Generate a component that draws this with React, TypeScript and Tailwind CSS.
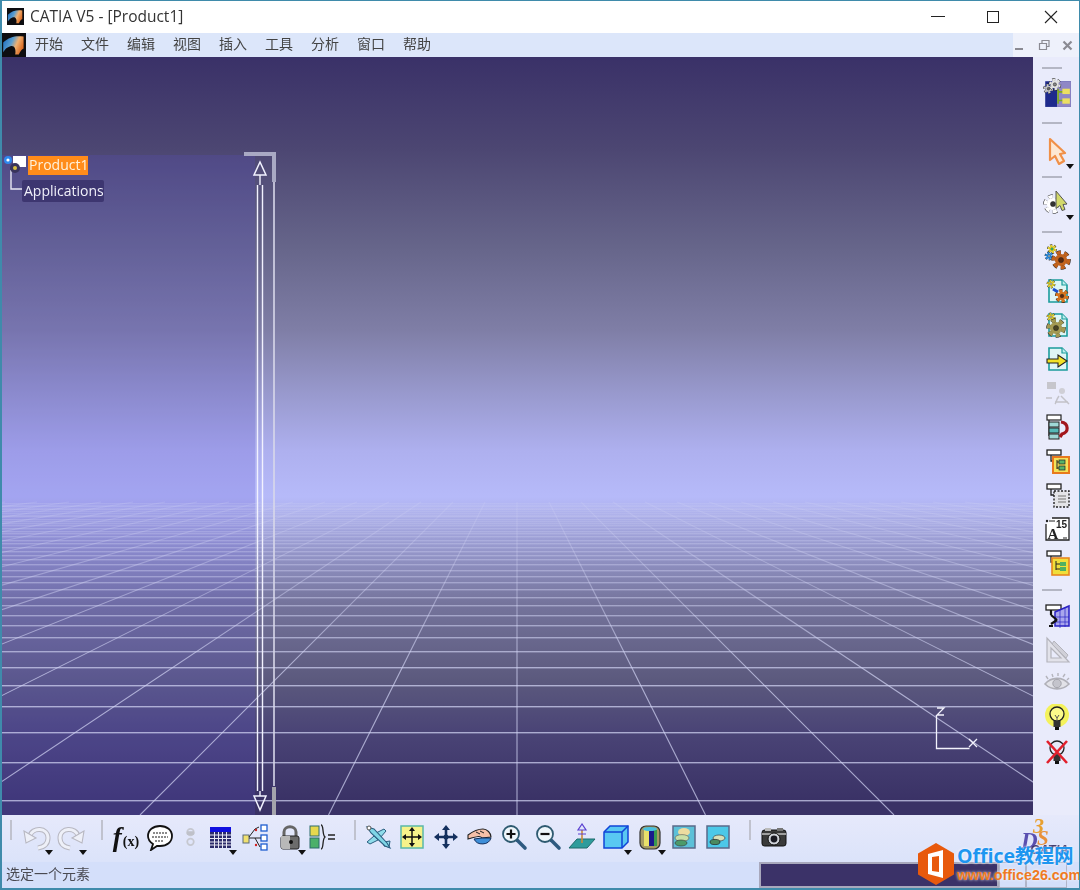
import type { ReactNode } from 'react';

const MENUS = ['开始', '文件', '编辑', '视图', '插入', '工具', '分析', '窗口', '帮助'];

// perspective of the floor grid, in viewport coordinates
const CX = 515;
const HORIZON = 381;
const FLOOR_Y = Array.from({ length: 46 }, (_, n) => HORIZON + 1 / (0.00276 + 0.000322 * n)).filter((y) => y > 445);
const FLOOR_X = Array.from({ length: 61 }, (_, i) => i - 30);

function Svg({ children, size = 28 }: { children: ReactNode; size?: number }) {
  return (
    <svg width={size} height={size} viewBox="0 0 28 28" className="block">
      {children}
    </svg>
  );
}

function Gear({ x, y, r, fill, hole = '#fff' }: { x: number; y: number; r: number; fill: string; hole?: string }) {
  const dash = `${r * 0.5} ${r * 0.4}`;
  return (
    <g>
      <circle cx={x} cy={y} r={r * 0.88} fill="none" stroke="#222" strokeWidth={r * 0.42 + 1} strokeDasharray={dash} />
      <circle cx={x} cy={y} r={r * 0.88} fill="none" stroke={fill} strokeWidth={r * 0.42} strokeDasharray={dash} />
      <circle cx={x} cy={y} r={r * 0.72} fill={fill} />
      <circle cx={x} cy={y} r={r * 0.3} fill={hole} stroke="#222" strokeWidth="0.5" />
    </g>
  );
}

function Doc({ children }: { children?: ReactNode }) {
  return (
    <g>
      <path d="M6 3h13l5 5v17H6z" fill="#dff6f6" stroke="#1b9c9c" strokeWidth="1.6" />
      <path d="M19 3v5h5" fill="#bdeeee" stroke="#1b9c9c" strokeWidth="1.2" />
      {children}
    </g>
  );
}

function Tree({ y = 3 }: { y?: number }) {
  return (
    <g>
      <rect x="4" y={y} width="14" height="5" fill="#fff" stroke="#222" strokeWidth="1.3" />
      <path d={`M8 ${y + 5}v6h5`} fill="none" stroke="#222" strokeWidth="1.3" />
    </g>
  );
}

function AppLogo({ size, id }: { size: number; id: string }) {
  return (
    <svg width={size} height={size} viewBox="0 0 20 20" className="block">
      <defs>
        <linearGradient id={id} x1="0" y1="0.2" x2="1" y2="0.6">
          <stop offset="0" stopColor="#1f6fc0" />
          <stop offset="0.4" stopColor="#5c9fd0" />
          <stop offset="0.65" stopColor="#f0b070" />
          <stop offset="1" stopColor="#d8651e" />
        </linearGradient>
      </defs>
      <rect width="20" height="20" fill="#0d0d10" />
      <path d="M1 8C6 3 12 2 18 3v10c-2 1-3 3-4 5h-3c1-5-1-8-4-7-3 1-4 2-6 5z" fill={`url(#${id})`} />
    </svg>
  );
}

const SIDE = {
  catalog: (
    <Svg size={30}>
      <rect x="3" y="3" width="24" height="24" fill="#1e2a8c" />
      <rect x="14" y="3" width="13" height="24" fill="#8f87c6" />
      <path d="M15 10v14M15 13h5M15 21h5" stroke="#7faa20" strokeWidth="1.6" fill="none" />
      <rect x="19" y="10" width="7" height="5" fill="#ecdf62" />
      <rect x="19" y="19" width="7" height="5" fill="#ecdf62" />
      <Gear x={6} y={10} r={4} fill="#c8c8c8" hole="#666" />
      <Gear x={12} y={6} r={5} fill="#e2e2e2" hole="#888" />
    </Svg>
  ),
  cursor: (
    <Svg>
      <path d="M7 2l15 14-5 1 4 7-5 3-4-8-5 4z" fill="#fde8d2" stroke="#f09048" strokeWidth="2.2" strokeLinejoin="round" />
    </Svg>
  ),
  gearCursor: (
    <Svg>
      <Gear x={10} y={16} r={8.500} fill="#fff" hole="#333" />
      <path d="M13 3l11 13-4 .5 2 5-3 1-2-5-4 3z" fill="#d3d96a" stroke="#555" strokeWidth="1" />
    </Svg>
  ),
  gears: (
    <Svg>
      <Gear x={9} y={6} r={4} fill="#e8d530" hole="#2f9" />
      <Gear x={6} y={13} r={3.6} fill="#2a8fe6" hole="#dff" />
      <Gear x={18} y={17} r={8.500} fill="#c2631e" hole="#5a2a10" />
    </Svg>
  ),
  docGears: (
    <Svg>
      <Doc>
        <Gear x={8} y={7} r={3.6} fill="#e8d530" hole="#fff" />
        <path d="M10 12l5 3" stroke="#1b50d0" strokeWidth="3" />
        <Gear x={19} y={19} r={6} fill="#d8761e" hole="#5a2a10" />
      </Doc>
    </Svg>
  ),
  docGear: (
    <Svg>
      <Doc>
        <Gear x={8} y={6} r={3.6} fill="#e8d530" hole="#fff" />
        <Gear x={13} y={17} r={8.500} fill="#a39a52" hole="#4a4420" />
      </Doc>
    </Svg>
  ),
  docArrow: (
    <Svg>
      <Doc>
        <path d="M4 14h11v-4l9 6-9 6v-4H4z" fill="#f2e227" stroke="#222" strokeWidth="1.1" />
      </Doc>
    </Svg>
  ),
  disabled: (
    <Svg>
      <rect x="4" y="3" width="9" height="7" fill="#c6c6cc" />
      <circle cx="19" cy="12" r="3" fill="#cfcfd6" />
      <path d="M3 19h6M16 17c-3 4-3 7-4 8M18 17c3 3 6 6 8 8M12 23h13" stroke="#c2c2c8" strokeWidth="1.5" fill="none" />
    </Svg>
  ),
  treeUndo: (
    <Svg>
      <rect x="4" y="2" width="14" height="5" fill="#fff" stroke="#222" strokeWidth="1.2" />
      <path d="M6 7v16" stroke="#222" strokeWidth="1.2" />
      <rect x="6" y="9" width="10" height="5" fill="#9fd7d7" stroke="#222" />
      <rect x="6" y="15" width="10" height="5" fill="#55b8b8" stroke="#222" />
      <rect x="6" y="21" width="10" height="5" fill="#9fd7d7" stroke="#222" />
      <path d="M18 9c8 1 8 11 1 12l-2 3" fill="none" stroke="#a3161c" strokeWidth="3.2" />
    </Svg>
  ),
  treeOrange: (
    <Svg>
      <Tree />
      <rect x="10" y="10" width="16" height="16" fill="#f3e25a" stroke="#e8791e" strokeWidth="2" />
      <path d="M14 13v9M14 15h3M14 21h3" stroke="#222" fill="none" />
      <rect x="16" y="13" width="6" height="4" fill="#55b36a" stroke="#222" strokeWidth="0.7" />
      <rect x="16" y="19" width="6" height="4" fill="#55b36a" stroke="#222" strokeWidth="0.7" />
    </Svg>
  ),
  treeDots: (
    <Svg>
      <Tree />
      <rect x="11" y="10" width="15" height="16" fill="#e4e4e8" stroke="#222" strokeWidth="1.4" strokeDasharray="2 1.5" />
      <path d="M15 15h8M15 18h8M15 21h8" stroke="#999" strokeWidth="1.4" />
    </Svg>
  ),
  text: (
    <Svg>
      <path d="M9 3h17v22H3V9" fill="#fff" stroke="#222" strokeWidth="1.3" />
      <circle cx="4" cy="6" r="1.2" fill="#222" />
      <path d="M6 6h6M20 23h4" stroke="#222" />
      <text x="13" y="13" fontFamily="Liberation Sans" fontWeight="700" fontSize="10" fill="#222">15</text>
      <text x="4.5" y="24" fontFamily="Liberation Serif" fontWeight="700" fontSize="15" fill="#222">A</text>
    </Svg>
  ),
  treeYellow: (
    <Svg>
      <Tree y={2} />
      <rect x="9" y="9" width="17" height="17" fill="#f0de3a" stroke="#e8881e" strokeWidth="1.6" />
      <path d="M13 12v9M13 15h4M13 20h4" stroke="#222" fill="none" />
      <rect x="17" y="13" width="6" height="4" fill="#4eb062" />
      <rect x="17" y="18" width="6" height="4" fill="#4eb062" />
    </Svg>
  ),
  treeBlue: (
    <Svg>
      <rect x="3" y="3" width="15" height="5" fill="#fff" stroke="#222" strokeWidth="1.3" />
      <path d="M12 10l14-6v20H12z" fill="#a9a6ec" stroke="#2a22c4" strokeWidth="1.5" />
      <path d="M17 8v18M22 6v19M12 15h14M12 20h14" stroke="#2a22c4" strokeWidth="0.7" />
      <path d="M8 8v5M8 13l6 5M8 22l6-4M6 24h4" stroke="#111" strokeWidth="2.2" fill="none" />
    </Svg>
  ),
  rule: (
    <Svg>
      <path d="M4 2v24h22zM8 12v10h10z" fill="#e2e2ea" fillRule="evenodd" stroke="#b4b4bc" strokeWidth="1.2" />
      <path d="M11 5l14 14-2 3L9 8z" fill="#d0d0d8" stroke="#b4b4bc" />
    </Svg>
  ),
  eye: (
    <Svg>
      <path d="M2 14c6-7 17-8 24 0-6 6-17 7-24 0z" fill="#e2e2e8" stroke="#b0b0b8" strokeWidth="1.6" />
      <circle cx="14" cy="13.5" r="4.2" fill="#c4c4cc" stroke="#a4a4ac" />
      <path d="M5 9l-2-3M10 7l-1-3M15 6V3M20 7l2-3M24 10l2-2" stroke="#b4b4bc" strokeWidth="1.4" />
    </Svg>
  ),
  bulb: (
    <Svg>
      <circle cx="14" cy="11" r="12" fill="#f4f25c" />
      <circle cx="14" cy="10" r="7" fill="#fbf98a" stroke="#222" strokeWidth="1.3" />
      <path d="M12 11l2 3 2-3M14 14v3" stroke="#555" fill="none" />
      <rect x="10.5" y="17" width="7" height="6" fill="#333" />
      <rect x="12" y="23" width="4" height="3" fill="#111" />
    </Svg>
  ),
  bulbOff: (
    <Svg>
      <circle cx="14" cy="10" r="7" fill="#e7e9f8" stroke="#222" strokeWidth="1.3" />
      <rect x="10.5" y="17" width="7" height="6" fill="#333" />
      <rect x="12" y="23" width="4" height="3" fill="#111" />
      <path d="M4 3l20 22M24 3L4 25" stroke="#e2202c" strokeWidth="2.6" />
    </Svg>
  ),
};

const BOTTOM = {
  undo: (
    <Svg>
      <path d="M7 13C9 4 25 4 25 15c0 6-4 9-10 10" fill="none" stroke="#b8b8c2" strokeWidth="5" />
      <path d="M7 13C9 4 25 4 25 15c0 6-4 9-10 10" fill="none" stroke="#eef0f8" strokeWidth="3" />
      <path d="M1 8l12 7-10 5z" fill="#eef0f8" stroke="#b8b8c2" strokeWidth="1.1" />
    </Svg>
  ),
  redo: (
    <Svg>
      <path d="M21 13C19 4 3 4 3 15c0 6 4 9 10 10" fill="none" stroke="#b8b8c2" strokeWidth="5" />
      <path d="M21 13C19 4 3 4 3 15c0 6 4 9 10 10" fill="none" stroke="#eef0f8" strokeWidth="3" />
      <path d="M27 8l-12 7 10 5z" fill="#eef0f8" stroke="#b8b8c2" strokeWidth="1.1" />
    </Svg>
  ),
  formula: (
    <div className="flex items-baseline font-['Liberation_Serif',serif] text-[#111] leading-none">
      <span className="mr-[1px] text-[27px] font-bold italic">f</span>
      <span className="text-[14px] font-bold">(x)</span>
    </div>
  ),
  bubble: (
    <Svg>
      <path d="M14 3c7 0 12 4 12 10s-5 10-12 10l-3 0-6 4 2-6c-3-2-5-5-5-8 0-6 5-10 12-10z" fill="#fff" stroke="#111" strokeWidth="1.8" />
      <path d="M7 10h14M6 14h16M9 18h9" stroke="#666" strokeWidth="1.3" strokeDasharray="2 1" />
    </Svg>
  ),
  ring: (
    <Svg>
      <circle cx="14" cy="9" r="3.4" fill="none" stroke="#c6c8d0" strokeWidth="1.8" />
      <circle cx="14" cy="19" r="3.4" fill="none" stroke="#c6c8d0" strokeWidth="1.8" />
      <rect x="10" y="8" width="8" height="4" rx="1.5" fill="#bfc1c9" />
    </Svg>
  ),
  table: (
    <Svg>
      <rect x="3" y="4" width="21" height="21" fill="#2b2b6a" />
      <rect x="3" y="4" width="21" height="5" fill="#1010e0" />
      <path d="M3 12h21M3 15.5h21M3 19h21M3 22h21M7.5 9v16M11.5 9v16M15.5 9v16M19.5 9v16" stroke="#e8e8f2" strokeWidth="1" />
    </Svg>
  ),
  network: (
    <Svg>
      <rect x="2" y="12" width="6" height="8" fill="#f0e070" stroke="#5a6a78" />
      <rect x="20" y="2" width="6" height="6" fill="#fff" stroke="#1f5ed0" strokeWidth="1.3" />
      <rect x="20" y="12" width="6" height="6" fill="#fff" stroke="#1f5ed0" strokeWidth="1.3" />
      <rect x="20" y="21" width="6" height="6" fill="#fff" stroke="#1f5ed0" strokeWidth="1.3" />
      <path d="M8 15h12M8 14l6-8M14 6l4-2M14 15l5 9" stroke="#222" strokeWidth="1" fill="none" />
      <circle cx="15" cy="7" r="1.2" fill="#d02020" />
      <circle cx="15" cy="22" r="1.2" fill="#d02020" />
    </Svg>
  ),
  lock: (
    <Svg>
      <path d="M8 13V9c0-7 12-7 12 0v4" fill="none" stroke="#666" strokeWidth="3" />
      <rect x="5" y="13" width="18" height="13" rx="2" fill="#6c6c6c" stroke="#222" />
      <path d="M5 13h9v13H7a2 2 0 0 1-2-2z" fill="#b8b8b8" />
      <circle cx="15" cy="19" r="2" fill="#111" />
    </Svg>
  ),
  params: (
    <Svg>
      <rect x="1" y="3" width="9" height="10" fill="#e6d84e" stroke="#2b6a6a" />
      <rect x="1" y="15" width="9" height="10" fill="#4cb06a" stroke="#2b6a6a" />
      <path d="M12 2c3 0 1 10 4 12-3 2-1 12-4 12" fill="none" stroke="#222" strokeWidth="1.3" />
      <path d="M19 12h7M19 16h7" stroke="#222" strokeWidth="1.5" />
    </Svg>
  ),
  plane: (
    <Svg>
      <path d="M12 10l8-4 2 2-6 7zM10 13l-7 6 3 2 8-4zM20 19l6-1-1 6-5-1z" fill="#8fdcea" stroke="#2a5e80" strokeWidth="1" />
      <path d="M3 4l7 2 13 14 3 5-5-2L7 10z" fill="#7fd6e6" stroke="#2a5e80" strokeWidth="1.100" />
      <circle cx="5" cy="5" r="2" fill="#fff" stroke="#555" />
    </Svg>
  ),
  fit: (
    <Svg>
      <rect x="3" y="3" width="22" height="22" fill="#f6f28a" stroke="#5ab8a8" strokeWidth="1.5" />
      <path d="M14 6v16M6 14h16" stroke="#111" strokeWidth="1.5" />
      <path d="M14 4l-3 4h6zM14 24l-3-4h6zM4 14l4-3v6zM24 14l-4-3v6z" fill="#111" />
    </Svg>
  ),
  move: (
    <Svg>
      <path d="M14 7v14M7 14h14" stroke="#14305e" strokeWidth="2.6" />
      <path d="M14 2l-4 5h8zM14 26l-4-5h8zM2 14l5-4v8zM26 14l-5-4v8z" fill="#14305e" />
      <circle cx="14" cy="14" r="2.5" fill="#14305e" />
    </Svg>
  ),
  hand: (
    <Svg>
      <path d="M2 12c4-3 9-6 15-6 4 0 8 4 8 8l-9 1c-2-3-6-1-14 1z" fill="#f6c0a8" stroke="#222" strokeWidth="1.1" />
      <path d="M8 16a9 8 0 0 0 17-1l-9 0z" fill="#3e8ed8" stroke="#14305e" />
      <path d="M10 9l4 2M14 8l4 2" stroke="#222" />
    </Svg>
  ),
  zoomIn: (
    <Svg>
      <path d="M17 17l8 8" stroke="#2e5a80" strokeWidth="3.6" strokeLinecap="round" />
      <circle cx="11" cy="11" r="8" fill="#eef6fb" stroke="#2e5a70" strokeWidth="1.8" />
      <path d="M11 6.5v9M6.5 11h9" stroke="#111" strokeWidth="2.2" />
    </Svg>
  ),
  zoomOut: (
    <Svg>
      <path d="M17 17l8 8" stroke="#2e5a80" strokeWidth="3.6" strokeLinecap="round" />
      <circle cx="11" cy="11" r="8" fill="#eef6fb" stroke="#2e5a70" strokeWidth="1.8" />
      <path d="M6.5 11h9" stroke="#111" strokeWidth="2.2" />
    </Svg>
  ),
  normal: (
    <Svg>
      <path d="M1 25l8-9h18l-8 9z" fill="#2e9c9c" stroke="#1c6a6a" />
      <path d="M14 20V5" stroke="#c88a3c" strokeWidth="1.6" />
      <path d="M14 1l-4 6h8z" fill="#dfe6fa" stroke="#5a3fd0" strokeWidth="1.2" />
      <path d="M10 11h8" stroke="#5a3fd0" />
    </Svg>
  ),
  cube: (
    <Svg>
      <path d="M2 9l6-6h18v16l-6 6H2z" fill="#59c8f2" stroke="#1044d8" strokeWidth="1.5" />
      <path d="M2 9h18v16M20 9l6-6" fill="none" stroke="#1044d8" strokeWidth="1.5" />
    </Svg>
  ),
  cylinder: (
    <Svg>
      <rect x="4" y="3" width="20" height="23" rx="6" fill="#a59b62" stroke="#333" strokeWidth="1.2" />
      <rect x="8" y="7" width="5" height="16" fill="#e8e06a" />
      <rect x="13" y="7" width="5" height="16" fill="#1a1a8c" />
      <rect x="18" y="7" width="3" height="16" fill="#3a9a50" />
      <ellipse cx="14" cy="6" rx="7" ry="2" fill="#48c0e0" />
    </Svg>
  ),
  image1: (
    <Svg>
      <rect x="3" y="3" width="22" height="22" fill="#5cc0d8" stroke="#5a6a8a" strokeWidth="1.5" />
      <ellipse cx="14" cy="9" rx="6" ry="4" fill="#ecdca0" />
      <ellipse cx="12" cy="15" rx="7" ry="3.4" fill="#c8e0a8" stroke="#555" strokeWidth="0.6" />
      <ellipse cx="11" cy="20" rx="6" ry="3" fill="#4c9a6a" stroke="#333" strokeWidth="0.6" />
    </Svg>
  ),
  image2: (
    <Svg>
      <rect x="3" y="3" width="22" height="22" fill="#4cc8e8" stroke="#5a6a8a" strokeWidth="1.5" />
      <ellipse cx="15" cy="15" rx="6" ry="3" fill="#d8e0b8" stroke="#444" strokeWidth="0.7" />
      <ellipse cx="11" cy="19" rx="5" ry="2.6" fill="#4c8a60" stroke="#222" strokeWidth="0.7" />
    </Svg>
  ),
  camera: (
    <Svg>
      <rect x="2" y="7" width="24" height="16" rx="2.5" fill="#3a3a3a" stroke="#111" />
      <rect x="5" y="5" width="6" height="3" fill="#bbb" />
      <rect x="17" y="5" width="6" height="3" fill="#777" />
      <path d="M2 11h24" stroke="#ccc" strokeWidth="1.4" />
      <circle cx="14" cy="16" r="6" fill="#cfd2d8" stroke="#111" />
      <circle cx="14" cy="16" r="3.4" fill="#1a1a22" />
    </Svg>
  ),
};

function Handle({ className }: { className: string }) {
  return <div className={`ml-[7px] h-[2px] w-[20px] self-start bg-[#b4b6c4] ${className}`} />;
}

function VHandle({ className }: { className: string }) {
  return <div className={`h-[20px] w-[2px] shrink-0 self-start bg-[#c0c2ce] ${className}`} />;
}

function Drop({ className = 'right-0 -bottom-[1px]' }: { className?: string }) {
  return (
    <span className={`absolute h-0 w-0 border-x-[4px] border-t-[5px] border-x-transparent border-t-[#111] ${className}`} />
  );
}

function SideIcon({ icon, drop }: { icon: ReactNode; drop?: boolean }) {
  return (
    <div className="relative flex h-[34px] w-[34px] items-center justify-center">
      {icon}
      {drop && <Drop />}
    </div>
  );
}

function BarIcon({ icon, drop, w = 'w-[34px]' }: { icon: ReactNode; drop?: boolean; w?: string }) {
  return (
    <div className={`relative flex h-[34px] shrink-0 items-center justify-center ${w}`}>
      {icon}
      {drop && <Drop className="right-[1px] -bottom-[1px]" />}
    </div>
  );
}

function Viewport() {
  return (
    <div className="relative flex-1 overflow-hidden bg-[linear-gradient(180deg,#3a3168_0%,#4c4672_12%,#66658a_25%,#7f7ea6_36%,#9a9bd0_45%,#aeb0ef_52%,#b6baf9_58%,#75749c_72%,#5c5a7e_82%,#4a4476_89%,#3a3266_98%)]">
      <div className="absolute bottom-0 left-0 top-[98px] w-[253px] bg-[#5a50d0]/20" />

      <svg width="1031" height="758" className="absolute inset-0">
        <defs>
          <linearGradient id="fade" gradientUnits="userSpaceOnUse" x1="0" y1="445" x2="0" y2="620">
            <stop offset="0" stopColor="#d2d4f4" stopOpacity="0.2" />
            <stop offset="1" stopColor="#d2d4f4" stopOpacity="0.72" />
          </linearGradient>
        </defs>
        {FLOOR_Y.map((y) => (
          <rect key={y} x="0" y={Math.round(y)} width="1031" height="1.4" fill="url(#fade)" />
        ))}
        {FLOOR_X.map((n) => (
          <line
            key={n}
            x1={CX + n * 0.5 * 64}
            y1={445}
            x2={CX + n * 0.5 * 377}
            y2={758}
            stroke="url(#fade)"
            strokeWidth="1.1"
          />
        ))}
      </svg>

      {/* scale bar of the specification tree */}
      <svg width="40" height="670" className="absolute left-[240px] top-[93px]">
        <path d="M2 4h30v28" fill="none" stroke="#a9a9c4" strokeWidth="4" />
        <path d="M32 32v604" stroke="#d8d8ea" strokeWidth="1.6" />
        <rect x="30" y="637" width="4" height="28" fill="#a4a4ac" />
        <path d="M18 12l-6 13h12z" fill="none" stroke="#f2f2ff" strokeWidth="1.5" />
        <path d="M18 25v10M15.500 35v606M20.500 35v606M18 641v5" fill="none" stroke="#f2f2ff" strokeWidth="1.4" />
        <path d="M18 660l-6-14h12z" fill="none" stroke="#f2f2ff" strokeWidth="1.5" />
      </svg>

      {/* specification tree */}
      <svg width="26" height="50" className="absolute left-[1px] top-[97px]">
        <path d="M8 16v19h11" fill="none" stroke="#e8e8f4" strokeWidth="1.4" />
        <path d="M10 2h13v11H10z" fill="#fff" />
        <circle cx="12" cy="14" r="5" fill="#39345c" />
        <circle cx="12" cy="14" r="2" fill="#d8c040" />
        <circle cx="5" cy="6" r="4" fill="#2f88ee" />
        <circle cx="5" cy="6" r="1.600" fill="#fff" />
      </svg>
      <div className="absolute left-[26px] top-[99px] flex h-[19px] w-[60px] items-center bg-[#ff8c1a] pb-[3px] pl-[1px] font-['Open_Sans',sans-serif] text-[14px] text-[#fff2dc]">
        Product1
      </div>
      <div className="absolute left-[20px] top-[123px] flex h-[22px] w-[82px] items-center rounded-[2px] bg-[#3d3670] pb-[2px] pl-[2px] font-['Open_Sans',sans-serif] text-[14px] text-[#f0f0fa]">
        Applications
      </div>

      {/* compass axes */}
      <svg width="60" height="50" className="absolute left-[925px] top-[650px]">
        <path d="M9.500 8v33.500h33" fill="none" stroke="#f2f2fc" strokeWidth="1.3" />
        <path d="M10 1h7l-7 7h7" fill="none" stroke="#f2f2fc" strokeWidth="1.3" />
        <path d="M42 32l8 8M50 32l-8 8" fill="none" stroke="#f2f2fc" strokeWidth="1.3" />
      </svg>
    </div>
  );
}

export default function App() {
  return (
    <div className="relative flex h-[890px] w-[1080px] flex-col overflow-hidden border-2 border-t border-[#3f8bab] border-r-[1px] bg-white font-['Open_Sans',_'Noto_Sans_CJK_SC',sans-serif]">
      {/* title bar */}
      <div className="flex h-[32px] shrink-0 items-center bg-white pb-[1px] blur-[0.3px]">
        <div className="ml-[5px]">
          <AppLogo size={17} id="logoTitle" />
        </div>
        <span className="ml-[6px] text-[15.500px] text-[#333]">CATIA V5 - [Product1]</span>
        <div className="ml-auto flex items-center">
          <div className="mr-[42px] h-[1px] w-[14px] bg-[#222]" />
          <div className="mr-[45px] h-[12px] w-[12px] border border-[#222]" />
          <svg width="14" height="14" viewBox="0 0 14 14" className="mr-[21px]">
            <path d="M1 1l12 12M13 1L1 13" stroke="#222" strokeWidth="1.1" />
          </svg>
        </div>
      </div>

      {/* menu bar */}
      <div className="flex h-[24px] shrink-0 items-center bg-[#dce6fa] blur-[0.4px]">
        <AppLogo size={24} id="logoMenu" />
        <div className="-mt-[4px] ml-[9px] flex gap-[18px] font-['Noto_Sans_CJK_SC',sans-serif] text-[14px] text-[#444]">
          {MENUS.map((m) => (
            <span key={m}>{m}</span>
          ))}
        </div>
        <div className="ml-auto flex h-full w-[66px] items-center bg-[#eef1fb] text-[#8a8a92]">
          <div className="ml-[2px] mt-[8px] h-[2px] w-[8px] bg-[#8a8a92]" />
          <svg width="12" height="12" viewBox="0 0 12 12" className="ml-[15px]">
            <path d="M1.500 4.500h7v6h-7zM4 4.500v-3h7v6H8.500" fill="none" stroke="#8a8a92" strokeWidth="1.2" />
          </svg>
          <svg width="11" height="11" viewBox="0 0 11 11" className="ml-[12px]">
            <path d="M1.500 1.500l8 8M9.500 1.500l-8 8" stroke="#8a8a92" strokeWidth="2.2" />
          </svg>
        </div>
      </div>

      {/* viewport and right toolbar */}
      <div className="flex h-[758px] shrink-0 blur-[0.4px]">
        <Viewport />
        <div className="flex w-[46px] shrink-0 flex-col items-center bg-[#e9ebfb] pl-[2px]">
          <Handle className="mt-[10px] mb-[7px]" />
          <SideIcon icon={SIDE.catalog} />
          <Handle className="mt-[12px] mb-[10px]" />
          <SideIcon icon={SIDE.cursor} drop />
          <Handle className="mt-[8px] mb-[7px]" />
          <SideIcon icon={SIDE.gearCursor} drop />
          <Handle className="mt-[12px] mb-[7px]" />
          <SideIcon icon={SIDE.gears} />
          <SideIcon icon={SIDE.docGears} />
          <SideIcon icon={SIDE.docGear} />
          <SideIcon icon={SIDE.docArrow} />
          <SideIcon icon={SIDE.disabled} />
          <SideIcon icon={SIDE.treeUndo} />
          <SideIcon icon={SIDE.treeOrange} />
          <SideIcon icon={SIDE.treeDots} />
          <SideIcon icon={SIDE.text} />
          <SideIcon icon={SIDE.treeYellow} />
          <Handle className="mt-[9px] mb-[8px]" />
          <SideIcon icon={SIDE.treeBlue} />
          <SideIcon icon={SIDE.rule} />
          <SideIcon icon={SIDE.eye} />
          <SideIcon icon={SIDE.bulb} />
          <SideIcon icon={SIDE.bulbOff} />
        </div>
      </div>

      {/* bottom toolbar */}
      <div className="relative flex h-[47px] shrink-0 items-start bg-[linear-gradient(180deg,#e6e9fb,#dbe3fa)] pt-[5px] blur-[0.4px]">
        <VHandle className="ml-[8px]" />
        <div className="ml-[8px] flex">
          <BarIcon icon={BOTTOM.undo} drop />
          <BarIcon icon={BOTTOM.redo} drop />
        </div>
        <VHandle className="ml-[13px]" />
        <div className="ml-[6px] flex">
          <BarIcon icon={BOTTOM.formula} />
          <BarIcon icon={BOTTOM.bubble} />
          <BarIcon icon={BOTTOM.ring} w="w-[27px]" />
          <BarIcon icon={BOTTOM.table} drop />
          <BarIcon icon={BOTTOM.network} />
          <BarIcon icon={BOTTOM.lock} drop w="w-[35px]" />
          <BarIcon icon={BOTTOM.params} w="w-[32px]" />
        </div>
        <VHandle className="ml-[15px]" />
        <div className="ml-[5px] flex">
          <BarIcon icon={BOTTOM.plane} />
          <BarIcon icon={BOTTOM.fit} />
          <BarIcon icon={BOTTOM.move} />
          <BarIcon icon={BOTTOM.hand} />
          <BarIcon icon={BOTTOM.zoomIn} />
          <BarIcon icon={BOTTOM.zoomOut} />
          <BarIcon icon={BOTTOM.normal} />
          <BarIcon icon={BOTTOM.cube} drop />
          <BarIcon icon={BOTTOM.cylinder} drop />
          <BarIcon icon={BOTTOM.image1} />
          <BarIcon icon={BOTTOM.image2} />
        </div>
        <VHandle className="ml-[14px]" />
        <div className="ml-[6px]">
          <BarIcon icon={BOTTOM.camera} />
        </div>
      </div>

      {/* status bar */}
      <div className="flex h-[26px] shrink-0 items-center bg-[#d4dffa] blur-[0.4px]">
        <span className="-mt-[4px] ml-[4px] font-['Noto_Sans_CJK_SC',sans-serif] text-[14px] text-[#4a4a52]">选定一个元素</span>
        <div className="ml-auto mr-[12px] flex h-full">
          <div className="h-full w-[240px] border-2 border-[#a8a8bc] bg-[#3b3268]" />
          <div className="h-full w-[27px] border border-[#b0b4c8]" />
          <div className="h-full w-[41px] border border-[#b0b4c8]" />
        </div>
      </div>

      {/* CATIA logo */}
      <div className="absolute left-[1018px] top-[811px] h-[46px] w-[56px] font-['Liberation_Serif',serif] font-bold italic blur-[0.4px]">
        <span className="absolute left-[13px] top-[3px] text-[22px] leading-none text-[#e8a030]">3</span>
        <span className="absolute left-[1px] top-[17px] text-[23px] leading-none text-[#5a50b0]">D</span>
        <span className="absolute left-[17px] top-[16px] text-[21px] leading-none text-[#e8903a]">S</span>
        <span className="absolute left-[10px] top-[31px] font-['Liberation_Sans',sans-serif] text-[13px] leading-none text-[#3b3268]">CATIA</span>
      </div>

      {/* watermark */}
      <div className="absolute left-[915px] top-[841px] flex items-start">
        <svg width="38" height="44" viewBox="0 0 38 44" className="block">
          <path d="M19 1l18 10.500v21L19 43 1 32.500v-21z" fill="#e8590c" />
          <path d="M11 12l15-4v28l-15-4zM15 15v14l7 1V14z" fill="#fff" fillRule="evenodd" />
        </svg>
        <div className="ml-[2px] flex flex-col font-bold leading-none [text-shadow:0_0_3px_#fff]">
          <span className="mt-[3px] whitespace-nowrap text-[19.500px] leading-[22px] text-[#1e96f0]">Office教程网</span>
          <span className="whitespace-nowrap font-['Liberation_Sans',sans-serif] text-[14.300px] leading-[17px] text-[#ef7a22]">www.office26.com</span>
        </div>
      </div>
    </div>
  );
}
